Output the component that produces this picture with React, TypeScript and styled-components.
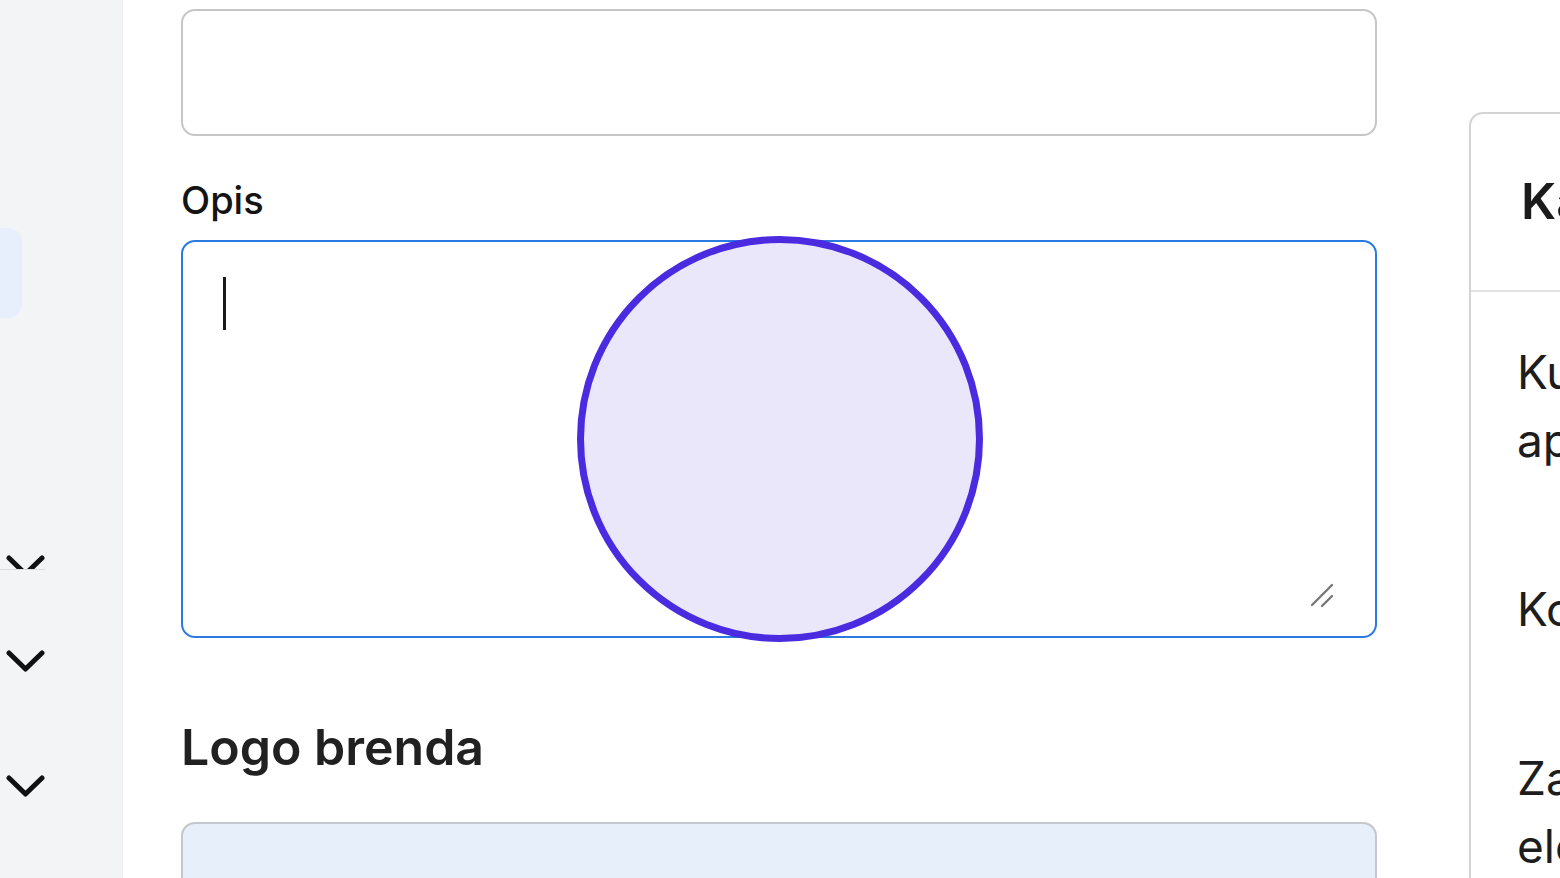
import styled, { createGlobalStyle } from "styled-components";

const GlobalStyle = createGlobalStyle`
    html, body {
        margin: 0;
        padding: 0;
        background: #ffffff;
        font-family: Inter, "Noto Sans", "Liberation Sans", sans-serif;
        color: #151515;
    }
    * { box-sizing: border-box; }
`;

function Chevron() {
    return (
        <svg width="39" height="23" viewBox="0 0 39 23" fill="none">
            <polyline points="3,3 19.5,19 36,3" stroke="#111" strokeWidth="5" strokeLinecap="round" strokeLinejoin="round" />
        </svg>
    );
}

export default function App() {
    return (
        <>
            <GlobalStyle />
            <Page>
                <Sidebar>
                    <ActivePill />
                    <ScrollClip>
                        <Chevron />
                    </ScrollClip>
                    <NavChevron $gap={80}><Chevron /></NavChevron>
                    <NavChevron $gap={102}><Chevron /></NavChevron>
                </Sidebar>

                <Content>
                    <FormColumn>
                        <TextInput />
                        <FieldLabel>Opis</FieldLabel>
                        <TextAreaBox>
                            <Caret />
                            <ResizeGrip width="26" height="26" viewBox="0 0 26 26">
                                <line x1="3" y1="23" x2="23" y2="3" stroke="#777" strokeWidth="2.4" strokeLinecap="round" />
                                <line x1="13" y1="24" x2="23" y2="14" stroke="#777" strokeWidth="2.4" strokeLinecap="round" />
                            </ResizeGrip>
                        </TextAreaBox>
                        <SectionTitle>Logo brenda</SectionTitle>
                        <UploadBox />
                    </FormColumn>

                    <InfoCard>
                        <CardHeader>Kako to funkcioniše</CardHeader>
                        <CardBody>
                            <CardText>Kupci će videti vaš logo u<br />aplikaciji i na računima.</CardText>
                            <CardText>Kontakt podaci su opcioni.</CardText>
                            <CardText>Za pomoć nas kontaktirajte<br />elektronskom poštom.</CardText>
                        </CardBody>
                    </InfoCard>
                </Content>

                <TouchIndicator />
            </Page>
        </>
    );
}

const Page = styled.div`
    position: relative;
    display: flex;
    width: 1560px;
    height: 878px;
    overflow: hidden;
    background: #fff;
`;

const Sidebar = styled.aside`
    width: 123px;
    flex-shrink: 0;
    background: #f3f4f6;
    box-shadow: inset -1px 0 0 #ececee;
    display: flex;
    flex-direction: column;
    padding-top: 228px;
    overflow: hidden;
    & > * { flex-shrink: 0; }
`;

const ActivePill = styled.div`
    margin-left: -100px;
    width: 122px;
    height: 90px;
    border-radius: 14px;
    background: #e7effc;
`;

const ScrollClip = styled.div`
    width: 45px;
    height: 252px;
    overflow: hidden;
    padding: 237px 0 0 6px;
    border-bottom: 1.5px solid #dcdde0;
    svg { display: block; }
`;

const NavChevron = styled.div<{ $gap: number }>`
    margin-top: ${(p) => p.$gap}px;
    padding-left: 6px;
    height: 23px;
    svg { display: block; }
`;

const Content = styled.main`
    flex: 1;
    display: flex;
    align-items: flex-start;
    gap: 92px;
    padding: 9px 0 0 58px;
`;

const FormColumn = styled.section`
    width: 1196px;
    flex-shrink: 0;
    display: flex;
    flex-direction: column;
    & > * { flex-shrink: 0; }
`;

const TextInput = styled.div`
    height: 127px;
    border: 2.5px solid #c6c6c8;
    border-radius: 14px;
    background: #fff;
`;

const FieldLabel = styled.label`
    margin: 41px 0 17px;
    font-size: 38px;
    line-height: 46px;
    font-weight: 500;
    color: #141414;
`;

const TextAreaBox = styled.div`
    position: relative;
    height: 398px;
    border: 2.5px solid #2a7ae2;
    border-radius: 14px;
    padding: 35px 40px;
    background: #fff;
`;

const Caret = styled.span`
    display: block;
    width: 3px;
    height: 53px;
    background: #1a1a1a;
`;

const ResizeGrip = styled.svg`
    position: absolute;
    right: 40px;
    bottom: 28px;
`;

const SectionTitle = styled.h2`
    margin: 79px 0 45px;
    font-size: 50px;
    line-height: 60px;
    font-weight: 600;
    color: #212121;
`;

const UploadBox = styled.div`
    height: 140px;
    border: 2.5px solid #c4c7cc;
    border-radius: 14px;
    background: #e6effa;
`;

const InfoCard = styled.aside`
    margin-top: 103px;
    width: 640px;
    flex-shrink: 0;
    border: 2.5px solid #d4d4d6;
    border-radius: 14px;
    background: #fff;
`;

const CardHeader = styled.h3`
    margin: 0;
    padding: 56px 48px 58px 50px;
    font-size: 50px;
    line-height: 62px;
    font-weight: 600;
    color: #1b1b1b;
    white-space: nowrap;
    border-bottom: 2px solid #e2e2e4;
`;

const CardBody = styled.div`
    padding: 46px 48px 40px 46px;
`;

const CardText = styled.p`
    margin: 0 0 101px;
    font-size: 46px;
    line-height: 68px;
    color: #1d1d1d;
    white-space: nowrap;
`;

const TouchIndicator = styled.div`
    position: absolute;
    left: 577px;
    top: 236px;
    width: 406px;
    height: 406px;
    border-radius: 50%;
    border: 7px solid #4b2be0;
    background: #ebe7fb;
    pointer-events: none;
`;
